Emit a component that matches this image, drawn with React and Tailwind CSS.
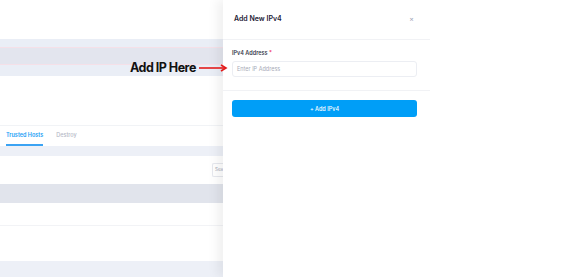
export default function App() {
  return (
    <div className="relative flex w-[578px] h-[277px] overflow-hidden bg-white font-['Inter',sans-serif]">
      {/* page behind the drawer */}
      <div className="w-[223px] shrink-0 flex flex-col">
        <div className="h-[39px] bg-white" />
        <div className="h-[8px] bg-[#eaeef6]" />
        <div className="h-[18px] bg-[#e3e5ee] border-y border-[#f5e0e8]" />
        <div className="h-[11px] bg-[#eaeef6]" />
        <div className="h-[49px] bg-white" />
        <div className="h-[21px] border-t border-[#f1f3f6] flex items-end gap-[13px] pl-[6px]">
          <div className="h-full flex items-center border-b-2 border-[#3ba3f3] text-[5.5px] font-semibold text-[#1a9ef5]">
            Trusted Hosts
          </div>
          <div className="h-full flex items-center text-[5.5px] font-medium text-[#b5b8c6] pb-[2px]">
            Destroy
          </div>
        </div>
        <div className="h-[10px] bg-[#edf0f7]" />
        <div className="h-[28px] bg-white flex items-center justify-end">
          <div className="w-[11px] h-[14px] border border-r-0 border-[#e6e8ee] rounded-l-[2px] text-[4.5px] text-[#a6a9b6] flex items-center pl-[2px] overflow-hidden whitespace-nowrap">
            Sea
          </div>
        </div>
        <div className="h-[19px] bg-[#e1e4ec]" />
        <div className="h-[23px] bg-white border-b border-[#f2f3f6]" />
        <div className="h-[35px] bg-white" />
        <div className="flex-1 bg-[#edf0f7]" />
      </div>

      {/* drawer */}
      <div className="w-[207px] shrink-0 flex flex-col bg-white shadow-[-6px_0_10px_rgba(0,0,0,0.06)]">
        <div className="h-[40px] flex items-center justify-between pl-[11px] pr-[16px] border-b border-[#f1f2f5]">
          <span className="text-[7px] font-semibold text-[#1e2135]">Add New IPv4</span>
          <span className="text-[7px] text-[#a1a5b7]">×</span>
        </div>
        <div className="pl-[9px] pr-[13px] pt-[9px] pb-[13px] border-b border-[#f1f2f5]">
          <div className="text-[5.5px] font-semibold text-[#3a3d4e] mb-[4px]">
            IPv4 Address <span className="text-[#f1416c]">*</span>
          </div>
          <div className="h-[16px] border border-[#eceef3] rounded-[3px] flex items-center pl-[4px] text-[5.5px] text-[#a8abb8]">
            Enter IP Address
          </div>
        </div>
        <div className="pl-[9px] pr-[13px] pt-[9px]">
          <div className="h-[17px] rounded-[3px] bg-[#009ef7] flex items-center justify-center text-[5.5px] font-medium text-white">
            + Add IPv4
          </div>
        </div>
      </div>

      <div className="flex-1 bg-white" />

      {/* annotation */}
      <div className="absolute left-[130px] top-[62px] flex items-center">
        <span className="text-[12.5px] font-bold tracking-[-0.5px] text-[#111] leading-none">Add IP Here</span>
        <svg width="29" height="8" viewBox="0 0 29 8" className="ml-[3px]">
          <line x1="0" y1="4" x2="26" y2="4" stroke="#e31b1b" strokeWidth="1.6" />
          <path d="M22 1 L27 4 L22 7" fill="none" stroke="#e31b1b" strokeWidth="1.6" />
        </svg>
      </div>
    </div>
  );
}
